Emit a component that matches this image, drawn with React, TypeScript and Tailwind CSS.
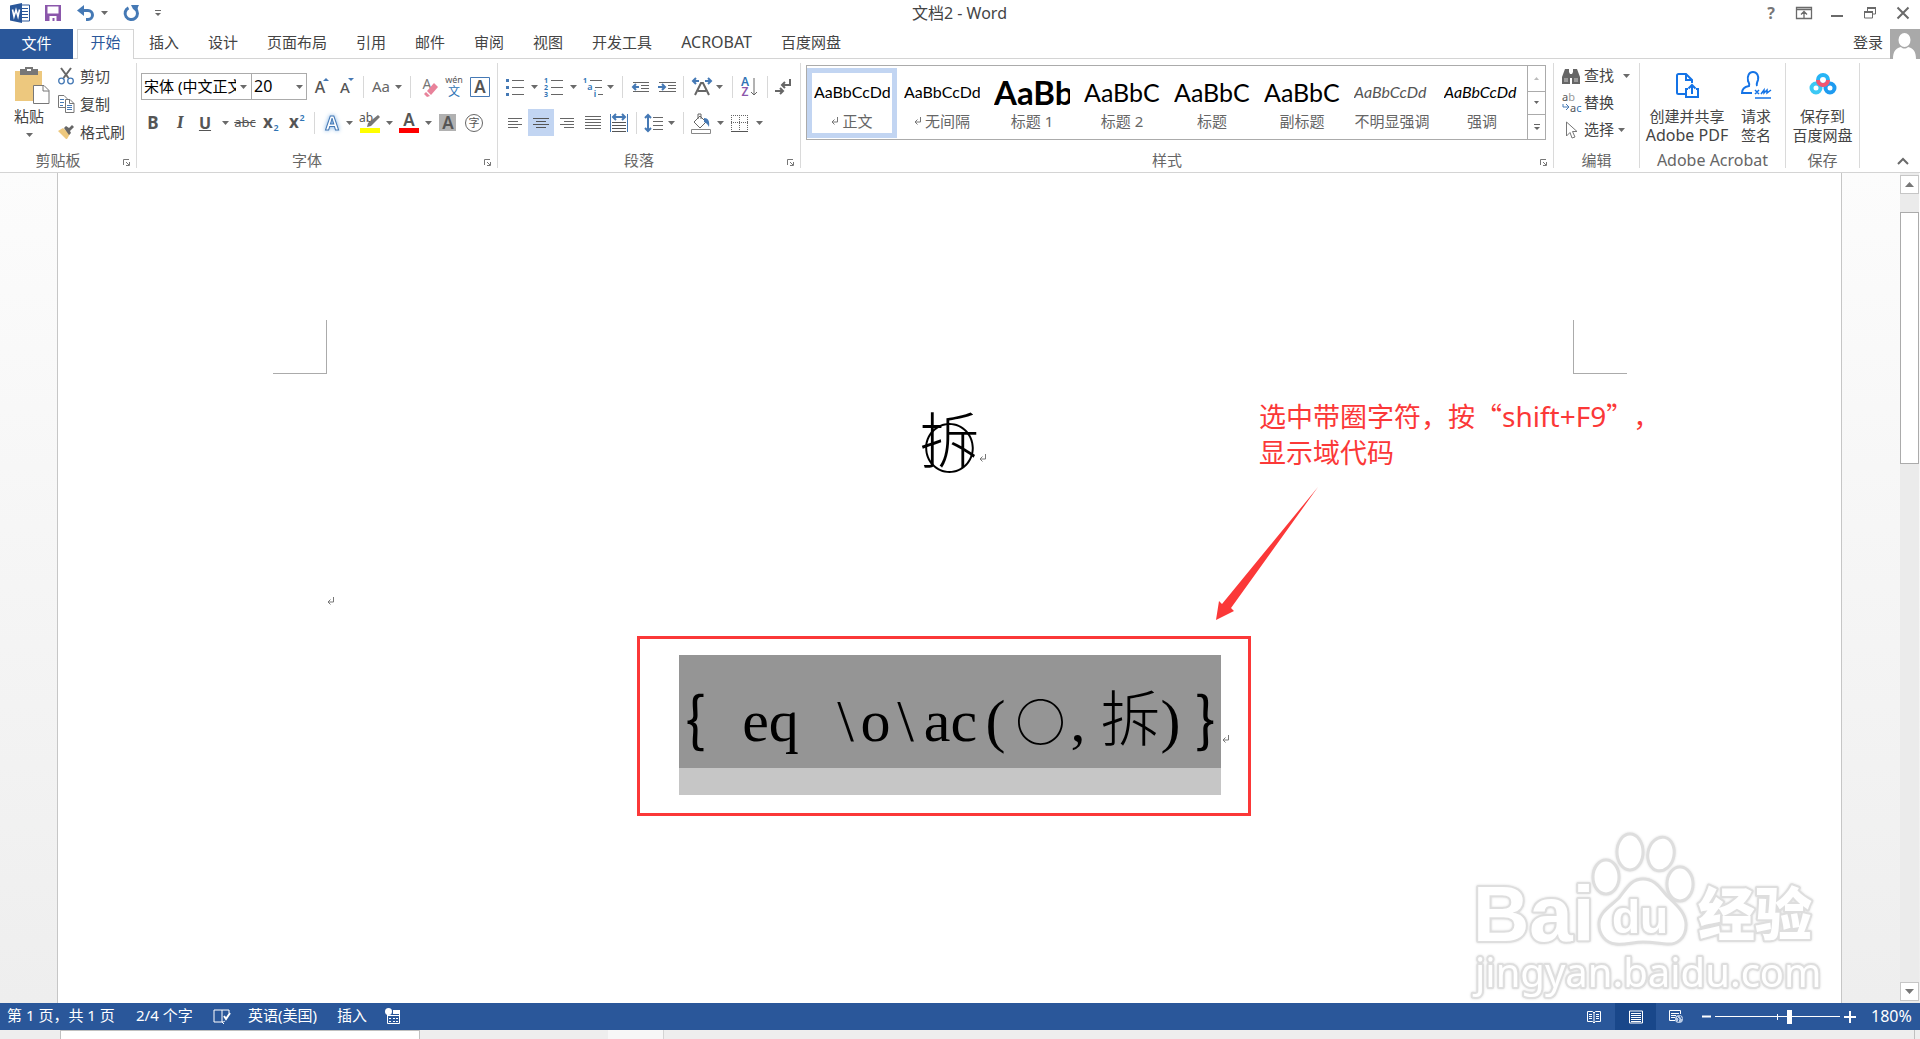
import React from "react";

type Kids = { children?: React.ReactNode; className?: string };

function Svg({ w = 24, h = 24, children, className = "" }: Kids & { w?: number; h?: number }) {
  return (
    <svg width={w} height={h} viewBox={`0 0 ${w} ${h}`} fill="none" className={`shrink-0 overflow-visible ${className}`} aria-hidden="true">
      {children}
    </svg>
  );
}

function Tool({ label, children, className = "" }: Kids & { label: string }) {
  return (
    <button type="button" aria-label={label} className={`flex h-[27px] w-6 shrink-0 items-center justify-center ${className}`}>
      {children}
    </button>
  );
}

function Caret() {
  return (
    <Svg w={7} h={4}>
      <path d="M0 0h7L3.500 4z" fill="#6a6a6a" />
    </Svg>
  );
}

function Drop({ label, className = "" }: { label: string; className?: string }) {
  return (
    <button type="button" aria-label={label} className={`flex h-[27px] w-[10px] shrink-0 items-center justify-center ${className}`}>
      <Caret />
    </button>
  );
}

function Sep({ className = "" }: { className?: string }) {
  return <div className={`h-[22px] w-px shrink-0 bg-[#d8d8d8] ${className}`} />;
}

function Group({ label, launcher = false, labelClass = "text-[15px]", className = "", children }: Kids & { label: string; launcher?: boolean; labelClass?: string }) {
  return (
    <section aria-label={label} className={`flex shrink-0 flex-col border-r border-[#dadada] ${className}`}>
      <div className="min-h-0 flex-1">{children}</div>
      <div className="flex h-[18px] items-center pt-[2px]">
        <div className={`flex-1 text-center leading-[18px] whitespace-nowrap text-[#666] ${labelClass}`}>{label}</div>
        {launcher && (
          <button type="button" aria-label={`${label} 设置`} className="flex w-5 justify-center pt-1">
            <Svg w={7} h={7}>
              <path d="M.5 6V.5H6M3 3l3 3M6.500 3v3.500H3" stroke="#777" />
            </Svg>
          </button>
        )}
      </div>
    </section>
  );
}

const tabs = ["插入", "设计", "页面布局", "引用", "邮件", "审阅", "视图", "开发工具", "ACROBAT", "百度网盘"];

function TitleBar() {
  return (
    <header className="relative flex h-[29px] shrink-0 items-center pb-[3px]">
      <div className="flex flex-1 items-center pl-[10px]">
        <Svg w={20} h={20}>
          <path d="M9 2h10.500v16H9" fill="#fff" stroke="#2a579a" />
          <path d="M12 5.500h6M12 8.500h6M12 11.500h6M12 14.500h6" stroke="#2a579a" />
          <path d="M0 2.500L12 0v20L0 17.500z" fill="#2a579a" />
          <path d="M2.500 6.500l1.500 7 2-6.500 2 6.500 1.500-7" stroke="#fff" strokeWidth="1.600" />
        </Svg>
        <button type="button" aria-label="保存" className="ml-[15px]">
          <Svg w={16} h={16}>
            <path d="M0 0h16v16H0z" fill="#8b57ab" />
            <path d="M2.500 1.500h11v7h-11zM4.500 11h7v5h-2v-3h-2v3h-3z" fill="#fff" />
          </Svg>
        </button>
        <button type="button" aria-label="撤消" className="ml-[16px]">
          <Svg w={19} h={16}>
            <path d="M3 5.500h8a4.500 4.500 0 010 9H9" stroke="#4579b5" strokeWidth="3" />
            <path d="M0 5.500L7 0v11z" fill="#4579b5" />
          </Svg>
        </button>
        <Drop label="撤消列表" className="ml-[3px]" />
        <button type="button" aria-label="重复" className="ml-[14px]">
          <Svg w={17} h={17}>
            <path d="M5.500 2.800a6.200 6.200 0 107 1" stroke="#4579b5" strokeWidth="3" />
            <path d="M8 0h8l-1 2-1 5-4-3z" fill="#4579b5" />
          </Svg>
        </button>
        <button type="button" aria-label="自定义快速访问工具栏" className="ml-[15px]">
          <Svg w={6} h={7}>
            <path d="M0 .5h6" stroke="#6a6a6a" />
            <path d="M0 3h6L3 6z" fill="#6a6a6a" />
          </Svg>
        </button>
      </div>
      <h1 className="text-[16px] leading-5 text-[#444]">文档2 - Word</h1>
      <div className="flex flex-1 items-center justify-end pr-[11px]">
        <button type="button" aria-label="帮助" className="w-[10px] text-[16px] leading-5 font-bold text-[#777]">?</button>
        <button type="button" aria-label="功能区显示选项" className="ml-[20px]">
          <Svg w={16} h={12}>
            <path d="M.5.5h15v11H.5zM.5 2.500h15M8 11V5M5 7.500L8 4.500l3 3" stroke="#6a6a6a" strokeWidth="1.300" />
          </Svg>
        </button>
        <button type="button" aria-label="最小化" className="ml-[19px]">
          <Svg w={12} h={12}>
            <path d="M0 9h12" stroke="#6a6a6a" strokeWidth="2" />
          </Svg>
        </button>
        <button type="button" aria-label="还原" className="ml-[21px]">
          <Svg w={12} h={12}>
            <path d="M3.500 4V1h8v6H9M.5 5h8v6h-8z" stroke="#6a6a6a" />
            <path d="M3 1h9M0 5h9" stroke="#6a6a6a" strokeWidth="2" />
          </Svg>
        </button>
        <button type="button" aria-label="关闭" className="ml-[21px]">
          <Svg w={12} h={12}>
            <path d="M.5.5l11 11M11.500.5l-11 11" stroke="#6a6a6a" strokeWidth="2" />
          </Svg>
        </button>
      </div>
    </header>
  );
}

function TabBar() {
  return (
    <nav aria-label="功能区选项卡" className="flex h-[30px] shrink-0 items-stretch text-[15px] text-[#444]">
      <button type="button" className="w-[73px] bg-[#2a579a] pb-[2px] text-white">文件</button>
      <div className="w-1 border-b border-[#d4d4d4]" />
      <button type="button" className="w-[57px] border border-b-0 border-[#d4d4d4] pb-1 text-[#2a579a]">开始</button>
      <div className="flex flex-1 items-center gap-[29px] border-b border-[#d4d4d4] pb-[3px] pl-[15px]">
        {tabs.map((t) => (
          <button type="button" key={t} className={t === "ACROBAT" ? "text-[16px] leading-5" : "leading-5 whitespace-nowrap"}>{t}</button>
        ))}
        <button type="button" className="mr-[7px] ml-auto">登录</button>
      </div>
      <Svg w={30} h={30}>
        <path d="M0 0h30v30H0z" fill="#a9a9a9" />
        <ellipse cx="14.500" cy="11" rx="6" ry="7" fill="#fff" />
        <path d="M3 30c0-8 3-11 8-12 2 2 5 2 7 0 5 1 8 4 8 12z" fill="#fff" />
      </Svg>
    </nav>
  );
}

function Clipboard() {
  return (
    <Group label="剪贴板" launcher className="w-[137px]">
      <div className="flex">
        <button type="button" className="ml-[9px] flex w-[40px] flex-col items-center pt-1 text-[15px] leading-5 text-[#444]">
          <Svg w={36} h={38} className="self-end">
            <path d="M2 4h27v30H2z" fill="#edc87e" />
            <path d="M7 2h5V0h8v2h5v6H7z" fill="#777" />
            <path d="M14 2h4v2h-4z" fill="#fff" />
            <path d="M20.500 18.500H31l5 5v13H20.500z" fill="#fff" stroke="#777" />
            <path d="M30 18v6h6" stroke="#777" />
          </Svg>
          <span className="mt-px whitespace-nowrap">粘贴</span>
          <span className="pt-[7px]"><Caret /></span>
        </button>
        <div className="ml-[9px] text-[15px] text-[#444]">
          <button type="button" className="flex h-7 items-center gap-[6px] pb-[2px]">
            <Svg w={16} h={18}>
              <path d="M3 1l7.500 10M13 1L5.500 11" stroke="#666" strokeWidth="2" />
              <circle cx="3.500" cy="14" r="2.800" stroke="#4579b5" strokeWidth="1.300" />
              <circle cx="12.500" cy="14" r="2.800" stroke="#4579b5" strokeWidth="1.300" />
            </Svg>
            剪切
          </button>
          <button type="button" className="flex h-7 items-center gap-[6px] pb-[2px]">
            <Svg w={16} h={18}>
              <path d="M.5.5H6l3 3v9H.5z" fill="#fff" stroke="#777" />
              <path d="M2 4.500h4M2 7.500h4M2 10.500h3" stroke="#4579b5" />
              <path d="M7.500 4.500H12l4 4v9H7.500z" fill="#fff" stroke="#777" />
              <path d="M11.500 4.500v4H16" stroke="#777" />
              <path d="M9 10.500h5M9 12.500h5M9 14.500h5" stroke="#4579b5" />
            </Svg>
            复制
          </button>
          <button type="button" className="flex h-7 items-center gap-[6px] pb-[2px]">
            <Svg w={16} h={18}>
              <path d="M0 8l5-3 7 6-3 5H8z" fill="#edc87e" />
              <path d="M6 5l2-2 3 2 3-3 2 2-4 4 1 2-2 2z" fill="#666" />
            </Svg>
            格式刷
          </button>
        </div>
      </div>
    </Group>
  );
}

function Letter({ x, y, size, fill = "#555", weight = 400, children }: { x: number; y: number; size: number; fill?: string; weight?: number; children: string }) {
  return (
    <text x={x} y={y} fontSize={size} fill={fill} fontWeight={weight} textAnchor="middle">{children}</text>
  );
}

function FontGroup() {
  return (
    <Group label="字体" launcher className="w-[361px]">
      <div className="flex items-center pt-[10px] pl-1">
        <div className="flex h-[27px] w-[111px] items-center border border-[#ababab] pl-[2px]">
          <input aria-label="字体名称" defaultValue="宋体 (中文正文)" className="w-[92px] min-w-0 pb-px text-[15px] text-black outline-none" />
          <Drop label="字体列表" className="ml-[2px]" />
        </div>
        <div className="-ml-px flex h-[27px] w-[56px] items-center border border-[#ababab] pl-[2px]">
          <input aria-label="字号" defaultValue="20" className="w-[40px] min-w-0 pb-px text-[16px] text-black outline-none" />
          <Drop label="字号列表" />
        </div>
        <Tool label="增大字号" className="ml-[3px]">
          <Svg><Letter x={10} y={18} size={16} weight={500}>A</Letter><path d="M13 6l3-3 3 3z" fill="#4579b5" /></Svg>
        </Tool>
        <Tool label="减小字号" className="ml-px">
          <Svg><Letter x={10} y={18} size={15} weight={500}>A</Letter><path d="M13 3h6l-3 3z" fill="#4579b5" /></Svg>
        </Tool>
        <Sep className="ml-1" />
        <button type="button" aria-label="更改大小写" className="ml-[7px] w-[20px] text-[15px] text-[#666]">Aa</button>
        <Drop label="大小写选项" className="ml-[2px]" />
        <Sep className="ml-[7px]" />
        <Tool label="清除所有格式" className="ml-[7px]">
          <Svg><Letter x={9} y={14} size={14} fill="#777">A</Letter><path d="M16 8l4 4-7 8-4-4z" fill="#e8829a" /><path d="M8 17l4 4-3 1-3-3z" fill="#e8829a" /></Svg>
        </Tool>
        <Tool label="拼音指南">
          <Svg><Letter x={12} y={8} size={9}>wén</Letter><Letter x={12} y={21} size={12} fill="#2f74b5">文</Letter></Svg>
        </Tool>
        <Tool label="字符边框" className="ml-[2px]">
          <Svg><path d="M2.500 2.500h19v19h-19z" stroke="#4579b5" /><Letter x={12} y={18} size={17} weight={600}>A</Letter></Svg>
        </Tool>
      </div>
      <div className="flex items-center pt-[9px] pl-1 text-[#555]">
        <Tool label="加粗" className="text-[17px] font-bold">B</Tool>
        <Tool label="倾斜" className="ml-[3px] font-serif text-[18px] font-bold italic">I</Tool>
        <Tool label="下划线" className="ml-px text-[16px] font-bold underline">U</Tool>
        <Drop label="下划线样式" className="ml-[3px]" />
        <Tool label="删除线" className="ml-[3px] text-[13px] line-through">abc</Tool>
        <Tool label="下标" className="ml-[2px]">
          <Svg><Letter x={9} y={17} size={17} weight={700}>x</Letter><Letter x={17} y={20} size={9} fill="#2f74b5" weight={600}>2</Letter></Svg>
        </Tool>
        <Tool label="上标" className="ml-[2px]">
          <Svg><Letter x={9} y={17} size={17} weight={700}>x</Letter><Letter x={17} y={10} size={9} fill="#2f74b5" weight={600}>2</Letter></Svg>
        </Tool>
        <Sep className="ml-[5px]" />
        <Tool label="文本效果" className="ml-[5px]">
          <Svg>
            <text x="12" y="19" fontSize="19" fontWeight="700" textAnchor="middle" fill="#fff" stroke="#4579b5" strokeWidth="1" className="drop-shadow-[0_0_2px_#7fb2e6]">A</text>
          </Svg>
        </Tool>
        <Drop label="文本效果选项" />
        <Tool label="突出显示" className="ml-[4px]">
          <Svg><Letter x={8} y={11} size={12}>ab</Letter><path d="M2 17h20v5H2z" fill="#ff0" /><path d="M20 4l2 2-9 9-4 1 1-4z" fill="#777" /></Svg>
        </Tool>
        <Drop label="突出显示颜色" className="ml-[2px]" />
        <Tool label="字体颜色" className="ml-[3px]">
          <Svg><Letter x={12} y={15} size={17} weight={600}>A</Letter><path d="M2 17h20v5H2z" fill="#f00" /></Svg>
        </Tool>
        <Drop label="字体颜色列表" className="ml-[2px]" />
        <Tool label="字符底纹" className="ml-[4px]">
          <Svg><path d="M2 3h17v17H2z" fill="#b1b1b1" /><Letter x={11} y={18} size={17} weight={600}>A</Letter></Svg>
        </Tool>
        <Tool label="带圈字符" className="ml-px">
          <Svg><circle cx="12" cy="12" r="8.500" stroke="#666" /><Letter x={12} y={16} size={11}>字</Letter></Svg>
        </Tool>
      </div>
    </Group>
  );
}

function ParagraphGroup() {
  return (
    <Group label="段落" launcher className="w-[303px]">
      <div className="flex items-center pt-[10px] pl-[5px]">
        <Tool label="项目符号">
          <Svg><path d="M9 5.500h12M9 12.500h12M9 19.500h12" stroke="#666" /><path d="M3 4h3v3H3zM3 11h3v3H3zM3 18h3v3H3z" fill="#4579b5" /></Svg>
        </Tool>
        <Drop label="项目符号库" className="ml-[2px]" />
        <Tool label="编号" className="ml-[3px]">
          <Svg><path d="M9 5.500h12M9 12.500h12M9 19.500h12" stroke="#666" /><Letter x={4} y={8} size={7} fill="#2f74b5" weight={700}>1</Letter><Letter x={4} y={15} size={7} fill="#2f74b5" weight={700}>2</Letter><Letter x={4} y={22} size={7} fill="#2f74b5" weight={700}>3</Letter></Svg>
        </Tool>
        <Drop label="编号库" className="ml-[2px]" />
        <Tool label="多级列表" className="ml-[3px]">
          <Svg><path d="M9 5.500h12M14 12.500h7M17 19.500h5" stroke="#666" /><Letter x={4} y={8} size={7} fill="#2f74b5" weight={700}>1</Letter><Letter x={9} y={15} size={9} fill="#2f74b5" weight={600}>a</Letter><Letter x={14} y={22} size={8} fill="#2f74b5" weight={700}>i</Letter></Svg>
        </Tool>
        <Drop label="多级列表库" />
        <Sep className="ml-[7px]" />
        <Tool label="减少缩进量" className="ml-[6px]">
          <Svg><path d="M4 7.500h16M12 10.500h8M12 13.500h8M4 16.500h16" stroke="#666" /><path d="M10 12H4M7 9l-3 3 3 3" stroke="#4579b5" strokeWidth="2" /></Svg>
        </Tool>
        <Tool label="增加缩进量" className="ml-[2px]">
          <Svg><path d="M4 7.500h17M13 10.500h8M13 13.500h8M4 16.500h17" stroke="#666" /><path d="M3 12h7M7 9l3 3-3 3" stroke="#4579b5" strokeWidth="2" /></Svg>
        </Tool>
        <Sep className="ml-[4px]" />
        <Tool label="中文版式" className="ml-[6px]">
          <Svg><path d="M9 6H3M6 3L3 6l3 3M15 6h6M18 3l3 3-3 3" stroke="#4579b5" strokeWidth="2" /><path d="M5 20l6-12h2l6 12M8 16h8" stroke="#666" strokeWidth="2" /></Svg>
        </Tool>
        <Drop label="中文版式选项" />
        <Sep className="ml-[8px]" />
        <Tool label="排序" className="ml-[5px]">
          <Svg><Letter x={7} y={11} size={12} fill="#2f74b5" weight={600}>A</Letter><Letter x={7} y={21} size={12} fill="#8b57ab" weight={600}>Z</Letter><path d="M16 3v17M13 17l3 3 3-3" stroke="#666" /></Svg>
        </Tool>
        <Sep className="ml-[5px]" />
        <Tool label="显示编辑标记" className="ml-[3px]">
          <Svg><path d="M19 4v6h-7M14 7l-3 3 3 3" stroke="#666" strokeWidth="2" /><path d="M4 16h7M9 13l3 3-3 3" stroke="#666" strokeWidth="2" /></Svg>
        </Tool>
      </div>
      <div className="flex items-center pt-[9px] pl-[5px]">
        <Tool label="左对齐">
          <Svg><path d="M5 7.500h14M5 10.500h10M5 13.500h14M5 16.500h10" stroke="#666" /></Svg>
        </Tool>
        <Tool label="居中" className="ml-px w-[26px] bg-[#c2d5f2]">
          <Svg><path d="M4 7.500h16M7 10.500h10M4 13.500h16M7 16.500h10" stroke="#555" /></Svg>
        </Tool>
        <Tool label="右对齐" className="ml-px">
          <Svg><path d="M5 7.500h14M9 10.500h10M5 13.500h14M9 16.500h10" stroke="#666" /></Svg>
        </Tool>
        <Tool label="两端对齐" className="ml-[2px]">
          <Svg><path d="M4 5.500h16M4 8.500h16M4 11.500h16M4 14.500h16M4 17.500h16" stroke="#666" /></Svg>
        </Tool>
        <Tool label="分散对齐" className="ml-[2px]">
          <Svg><path d="M3.500 3v18M20.500 3v18" stroke="#4579b5" /><path d="M7 6h10M9 3L6 6l3 3M15 3l3 3-3 3" stroke="#4579b5" strokeWidth="2" /><path d="M5 11.500h14M5 14.500h14M5 17.500h14M5 20.500h14" stroke="#555" /></Svg>
        </Tool>
        <Sep className="ml-[5px]" />
        <Tool label="行和段落间距" className="ml-[5px]">
          <Svg><path d="M6 4v16M3 7l3-3 3 3M3 17l3 3 3-3" stroke="#4579b5" strokeWidth="2" /><path d="M11 6.500h10M11 10.500h10M11 14.500h10M11 18.500h10" stroke="#666" /></Svg>
        </Tool>
        <Drop label="间距选项" />
        <Sep className="ml-[7px]" />
        <Tool label="底纹" className="ml-[5px]">
          <Svg><path d="M5 11l6-6 6 6-6 6z" stroke="#666" /><path d="M9 8V3h3v5" stroke="#666" /><path d="M15 7c4 0 6 3 5 9-1-2-2-4-5-5z" fill="#4579b5" /><path d="M2.500 18.500h19v4h-19z" fill="#fff" stroke="#888" /></Svg>
        </Tool>
        <Drop label="底纹颜色" className="ml-[2px]" />
        <Tool label="边框" className="ml-[3px]">
          <Svg><path d="M3.500 4v16M11.500 4v16M19.500 4v16M3 4.500h17M3 11.500h17" stroke="#666" strokeDasharray="1 1" /><path d="M3 20.500h17" stroke="#555" /></Svg>
        </Tool>
        <Drop label="边框选项" className="ml-[2px]" />
      </div>
    </Group>
  );
}

const styles = [
  { name: "正文", sample: "AaBbCcDd", mark: true, cls: "text-[16px] text-black" },
  { name: "无间隔", sample: "AaBbCcDd", mark: true, cls: "text-[16px] text-black" },
  { name: "标题 1", sample: "AaBb", cls: "text-[33px] font-bold text-black" },
  { name: "标题 2", sample: "AaBbC", cls: "text-[25px] text-black" },
  { name: "标题", sample: "AaBbC", cls: "text-[25px] text-black" },
  { name: "副标题", sample: "AaBbC", cls: "text-[25px] text-black" },
  { name: "不明显强调", sample: "AaBbCcDd", cls: "text-[16px] italic text-[#555]" },
  { name: "强调", sample: "AaBbCcDd", cls: "text-[16px] italic text-black" },
];

function ReturnMark({ className = "" }: { className?: string }) {
  return (
    <Svg w={7} h={8} className={className}>
      <path d="M6.500 0v5H1M3.500 2.500L1 5l2.500 2.500" stroke="#777" />
    </Svg>
  );
}

function StylesGroup() {
  return (
    <Group label="样式" launcher className="min-w-0 flex-1 shrink">
      <div className="mt-[2px] mr-[7px] ml-[5px] flex h-[75px] border border-[#ababab]">
        <div className="flex min-w-0 flex-1 items-center">
          {styles.map((s, i) => (
            <button
              type="button"
              key={s.name}
              className={`flex h-[70px] w-[90px] shrink-0 flex-col items-center ${i === 0 ? "border-[5px] border-[#c2d5f2] pt-0" : "pt-[5px]"}`}
            >
              <span className={`flex h-[38px] w-[76px] items-center overflow-hidden font-[Lato] leading-[38px] whitespace-nowrap ${s.cls}`}>{s.sample}</span>
              <span className="flex items-center gap-1 text-[15px] leading-5 whitespace-nowrap text-[#666]">
                {s.mark && <ReturnMark />}
                {s.name}
              </span>
            </button>
          ))}
        </div>
        <div className="flex w-[18px] flex-col border-l border-[#ababab]">
          <button type="button" aria-label="上一行" className="flex flex-1 items-center justify-center">
            <Svg w={5} h={3}><path d="M0 3h5L2.500 0z" fill="#bbb" /></Svg>
          </button>
          <button type="button" aria-label="下一行" className="flex h-[23px] items-center justify-center border-t border-[#ababab]">
            <Svg w={5} h={3}><path d="M0 0h5L2.500 3z" fill="#666" /></Svg>
          </button>
          <button type="button" aria-label="其他样式" className="flex flex-1 items-center justify-center border-t border-[#ababab]">
            <Svg w={6} h={6}><path d="M0 .5h6" stroke="#666" /><path d="M0 3h6L3 6z" fill="#666" /></Svg>
          </button>
        </div>
      </div>
    </Group>
  );
}

function EditGroup() {
  return (
    <Group label="编辑" className="w-[86px]">
      <div className="flex flex-col pl-2 text-[15px] text-[#444]">
        <button type="button" className="flex h-[27px] items-center pb-[2px]">
          <Svg w={18} h={16}>
            <path d="M3 1h4v3l1 2v10H0V9zM11 1h4l3 8v7h-8V6l1-2z" fill="#666" />
            <path d="M2 10h4v4H2zM12 10h4v4h-4z" fill="#fff" opacity=".35" />
            <path d="M8 6h2v4H8z" fill="#666" />
          </Svg>
          <span className="mr-[9px] ml-1">查找</span>
          <Caret />
        </button>
        <button type="button" className="flex h-[27px] items-center pb-[2px]">
          <Svg w={20} h={20}>
            <text x="0" y="8" fontSize="11" fill="#555">a<tspan fill="#999">b</tspan></text>
            <text x="8" y="19" fontSize="11" fill="#555">a<tspan fill="#2f74b5">c</tspan></text>
            <path d="M1 11v3h6M4 11l3 3-3 3" stroke="#4579b5" />
          </Svg>
          <span className="ml-[2px]">替换</span>
        </button>
        <button type="button" className="flex h-[27px] items-center pb-[2px]">
          <Svg w={18} h={18}>
            <path d="M4.500 1v14l3.500-3.500 2 5.500 3-1-2.500-5.500H15z" fill="#fff" stroke="#777" />
          </Svg>
          <span className="mr-1 ml-1">选择</span>
          <Caret />
        </button>
      </div>
    </Group>
  );
}

function AcrobatGroup() {
  return (
    <Group label="Adobe Acrobat" labelClass="text-[16px]" className="w-[146px]">
      <div className="flex text-[15px] leading-[19px] whitespace-nowrap text-[#444]">
        <button type="button" className="ml-[4px] flex w-[86px] flex-col items-center pt-[7px]">
          <Svg w={26} h={30}>
            <path d="M11 24H4.500a1.500 1.500 0 01-1.500-1.500V5.500A1.500 1.500 0 014.500 4H12l6 6v3M12 4v6h6" stroke="#1473e6" strokeWidth="2" />
            <path d="M14 19h-2v8h12v-8h-2M18 24v-8M14.500 18.500L18 15l3.500 3.500" stroke="#1473e6" strokeWidth="2" />
          </Svg>
          <span className="mt-[7px]">创建并共享</span>
          <span className="text-[16px]">Adobe PDF</span>
        </button>
        <button type="button" className="ml-[8px] flex w-[36px] flex-col items-center pt-[7px]">
          <Svg w={32} h={30}>
            <path d="M12 23H2c0-4 2-6 7-7 1-2 0-3-1-5-1-5 1-9 5-9s6 4 5 8c-1 3-2 4-1 6" stroke="#1473e6" strokeWidth="2" />
            <path d="M15 20l4 4M19 20l-4 4M21 24l3-4v3l3-3v3l4-3M15 28h16" stroke="#1473e6" strokeWidth="1.500" />
          </Svg>
          <span className="mt-[7px]">请求</span>
          <span>签名</span>
        </button>
      </div>
    </Group>
  );
}

function SaveGroup() {
  return (
    <Group label="保存" className="w-[74px]">
      <button type="button" className="flex w-full flex-col items-center pt-[7px] text-[15px] leading-[19px] text-[#444]">
        <Svg w={28} h={30}>
          <circle cx="7" cy="18" r="4.500" stroke="#3cc8f4" strokeWidth="4" />
          <circle cx="21" cy="18" r="4.500" stroke="#1e9bf0" strokeWidth="4" />
          <circle cx="14" cy="10" r="5" stroke="#27b4f5" strokeWidth="4" />
          <path d="M9 10a5 5 0 0010 0" stroke="#f4556f" strokeWidth="4" />
        </Svg>
        <span className="mt-[7px]">保存到</span>
        <span>百度网盘</span>
      </button>
    </Group>
  );
}

function Ribbon() {
  return (
    <div className="flex shrink-0 border-b border-[#d4d4d4] py-1">
      <div className="flex h-[105px] min-w-0 flex-1">
        <Clipboard />
        <FontGroup />
        <ParagraphGroup />
        <StylesGroup />
        <EditGroup />
        <AcrobatGroup />
        <SaveGroup />
        <div className="flex w-[60px] items-end justify-end pr-[11px] pb-[3px]">
          <button type="button" aria-label="折叠功能区">
            <Svg w={12} h={8}><path d="M1 7l5-5 5 5" stroke="#6a6a6a" strokeWidth="2" /></Svg>
          </button>
        </div>
      </div>
    </div>
  );
}

function Watermark() {
  return (
    <Svg w={370} h={173} className="absolute right-0 bottom-0">
      <g fill="#fff" stroke="#dedede" strokeWidth="3" className="drop-shadow-[0_0_1px_#dddddd]">
        <ellipse cx="135" cy="47" rx="13" ry="17" />
        <ellipse cx="159" cy="22" rx="13" ry="18" />
        <ellipse cx="190" cy="24" rx="13" ry="17" transform="rotate(12 190 24)" />
        <ellipse cx="209" cy="54" rx="13" ry="17" />
        <path d="M172 49C184 49 189 58 196 66C204 74 215 82 215 95C215 108 206 115 196 114C186 113 180 112 172 112C162 112 154 115 145 114C134 113 128 104 128 94C128 82 140 76 148 68C156 58 160 49 172 49Z" />
      </g>
      <g fill="#fff" stroke="#dedede" strokeWidth="4" strokeLinejoin="round" paintOrder="stroke" className="drop-shadow-[0_0_1px_#dddddd]">
        <text x="2" y="111" fontSize="78" fontWeight="700" fontFamily="Liberation Sans">Bai</text>
        <text x="141" y="103" fontSize="46" fontFamily="Liberation Sans" fontWeight="700">du</text>
        <text x="227" y="105" fontSize="57" fontWeight="900">经验</text>
        <text x="4" y="157" fontSize="40" fontFamily="Noto Sans">jingyan.baidu.com</text>
      </g>
    </Svg>
  );
}

const cjk = "font-['Noto_Sans_CJK_SC']";

const fieldCode = [
  { text: "{", cls: "w-[30px] font-['Noto_Sans_CJK_SC']" },
  { text: " ", cls: "w-[30px]" },
  { text: "eq", cls: "w-[60px]" },
  { text: " ", cls: "w-[30px]" },
  { text: "\\", cls: "w-[30px]" },
  { text: "o", cls: "w-[30px]" },
  { text: "\\", cls: "w-[30px]" },
  { text: "ac", cls: "w-[60px]" },
  { text: "(", cls: "w-[30px]" },
  { text: "○", cls: "w-[60px] font-['Noto_Sans_CJK_SC'] text-[50px]" },
  { text: ",", cls: "w-[30px] text-left" },
  { text: "拆", cls: "w-[60px] font-['Noto_Sans_CJK_SC'] font-light" },
  { text: ")", cls: "w-[30px] text-left" },
  { text: "}", cls: "w-[30px] font-['Noto_Sans_CJK_SC']" },
];

function Document() {
  return (
    <main className="flex min-h-0 flex-1 bg-linear-to-b from-[#fcfcfc] to-[#eeeeee]">
      <div className="w-[57px] shrink-0" />
      <div className="relative flex min-w-0 flex-1 flex-col border-x border-[#c6c6c6] bg-white">
        <div className="mt-[147px] flex justify-between pr-[214px] pl-[215px]">
          <div className="size-[54px] border-r border-b border-[#ababab]" />
          <div className="size-[54px] border-b border-l border-[#ababab]" />
        </div>
        <div className={`relative mt-8 h-[66px] self-center text-[60px] leading-[62px] font-light text-black ${cjk}`}>
          拆
          <span className="absolute top-[9px] left-0 w-full text-center text-[54px] font-normal">○</span>
          <ReturnMark className="absolute right-[-6px] bottom-[10px]" />
        </div>
        <ReturnMark className="mt-[125px] ml-[269px]" />

        <div className="relative mt-[50px] flex w-[542px] flex-col self-center bg-[#c6c6c6] pb-[27px]">
          <p className="flex h-[113px] items-baseline bg-[#959595] pt-[20px] pl-[2px] text-center font-['Liberation_Serif','Noto_Sans_CJK_SC',serif] text-[60px] leading-[80px] whitespace-pre text-black">
            {fieldCode.map((t, i) => (
              <span key={i} className={`shrink-0 ${t.cls}`}>{t.text}</span>
            ))}
          </p>
          <ReturnMark className="absolute top-[80px] -right-2" />
          <div className="absolute -top-[19px] -right-[30px] -bottom-[21px] -left-[42px] border-[3px] border-[#fb3838]" />
        </div>

        <p className="absolute top-[225px] right-[190px] w-[392px] text-[27px] leading-9 whitespace-nowrap text-[#fb3838] [text-spacing-trim:space-all]">
          选中带圈字符，按<span className={cjk}>“</span><span className="text-[28px]">shift+F9</span><span className={cjk}>”，</span>
          <br />
          显示域代码
        </p>
        <Svg w={104} h={136} className="absolute top-[312px] right-[522px]">
          <path d="M103 2L16 123l3 3L1 135l3-19 3 3z" fill="#fb3838" />
        </Svg>
        <Watermark />
      </div>
      <div className="flex w-[78px] shrink-0 justify-end pr-px">
        <div className="flex w-[19px] flex-col bg-[#ebebeb] py-[2px]">
          <button type="button" aria-label="向上滚动" className="flex h-[19px] items-center justify-center border border-[#c6c6c6] bg-white">
            <Svg w={9} h={5}><path d="M0 5h9L4.500 0z" fill="#777" /></Svg>
          </button>
          <div className="mt-[18px] h-[252px] border border-[#ababab] bg-white" />
          <button type="button" aria-label="向下滚动" className="mt-auto flex h-[19px] items-center justify-center border border-[#c6c6c6] bg-white">
            <Svg w={9} h={5}><path d="M0 0h9L4.500 5z" fill="#777" /></Svg>
          </button>
        </div>
      </div>
    </main>
  );
}

function StatusBar() {
  return (
    <footer className="flex h-[27px] shrink-0 items-center bg-[#2a579a] pr-[9px] pl-[7px] text-[15px] whitespace-nowrap text-white">
      <div className="flex items-center pb-[2px]">
        <span className="w-[129px]">第 1 页，共 1 页</span>
        <span className="w-[77px]">2/4 个字</span>
        <Svg w={18} h={16}>
          <path d="M9 14V2H1v12h8c2 0 3-1 3-1M9 2h7v3M9 14l2 2" stroke="#fff" />
          <path d="M11 8l2 3 4-6" stroke="#fff" strokeWidth="2" />
        </Svg>
        <span className="ml-[17px] w-[89px]">英语(美国)</span>
        <span className="w-[48px]">插入</span>
        <Svg w={16} h={16}>
          <path d="M2.500 5v10.500h12v-13H8M3 7.500h11M4 10.500h2M8 10.500h2M11 10.500h2M4 13.500h2M8 13.500h2M11 13.500h2" stroke="#fff" />
          <circle cx="3.500" cy="3.500" r="3.500" fill="#fff" />
          <path d="M8 2h7v4H8z" fill="#fff" />
        </Svg>
      </div>
      <div className="ml-auto flex h-full items-center">
        <button type="button" aria-label="阅读视图" className="mr-[14px]">
          <Svg w={14} h={14}>
            <path d="M.5 1.500h5L7 3l1.500-1.500h5v10h-5L7 13l-1.500-1.500h-5zM7 3v10M2 4.500h3M2 6.500h3M2 8.500h3M9 4.500h3M9 6.500h3M9 8.500h3" stroke="#fff" />
          </Svg>
        </button>
        <button type="button" aria-label="页面视图" className="flex h-full w-[41px] items-center justify-center bg-[#19478a]">
          <Svg w={14} h={14}>
            <path d="M.5 1h13v12H.5zM2 3.500h10M2 5.500h10M2 7.500h10M2 9.500h10M2 11.500h10" stroke="#fff" />
          </Svg>
        </button>
        <button type="button" aria-label="Web 版式视图" className="ml-[13px]">
          <Svg w={14} h={14}>
            <path d="M6 10.500H.5V.5h11V4M2 3.500h8M2 5.500h5M2 7.500h4" stroke="#fff" />
            <circle cx="10" cy="9" r="4" fill="#b9cbe6" />
            <path d="M8 7l2 2-1 3M11 6l2 3" stroke="#2a579a" />
          </Svg>
        </button>
        <button type="button" aria-label="缩小" className="ml-[19px]">
          <Svg w={9} h={9}><path d="M0 4.500h9" stroke="#fff" strokeWidth="2" /></Svg>
        </button>
        <div className="relative ml-1 flex h-4 w-[125px] items-center">
          <div className="h-px w-full bg-white" />
          <div className="absolute top-[5px] left-[62px] h-[6px] w-px bg-white" />
          <input
            type="range"
            aria-label="显示比例"
            min={0}
            max={100}
            defaultValue={60}
            className="absolute inset-0 m-0 w-full appearance-none bg-transparent [&::-webkit-slider-thumb]:h-[14px] [&::-webkit-slider-thumb]:w-[5px] [&::-webkit-slider-thumb]:appearance-none [&::-webkit-slider-thumb]:bg-white"
          />
        </div>
        <button type="button" aria-label="放大" className="ml-1">
          <Svg w={12} h={12}><path d="M0 6h12M6 0v12" stroke="#fff" strokeWidth="2" /></Svg>
        </button>
        <span className="ml-[15px] w-[40px] pb-[2px] text-right text-[16px]">180%</span>
      </div>
    </footer>
  );
}

export default function App() {
  return (
    <div lang="zh-CN" className="flex h-screen flex-col overflow-hidden bg-white font-['Noto_Sans','Noto_Sans_CJK_SC',sans-serif]">
      <TitleBar />
      <TabBar />
      <Ribbon />
      <Document />
      <StatusBar />
      <div className="flex h-[9px] shrink-0 bg-[#eeeeee]">
        <div className="ml-[60px] w-[360px] border border-b-0 border-[#c0c0c0] bg-white" />
        <div className="ml-[188px] w-[56px] border-r border-[#d4d4d4] bg-[#f7f7f7]" />
        <div className="mr-[5px] ml-auto w-px bg-[#c0c0c0]" />
      </div>
    </div>
  );
}
